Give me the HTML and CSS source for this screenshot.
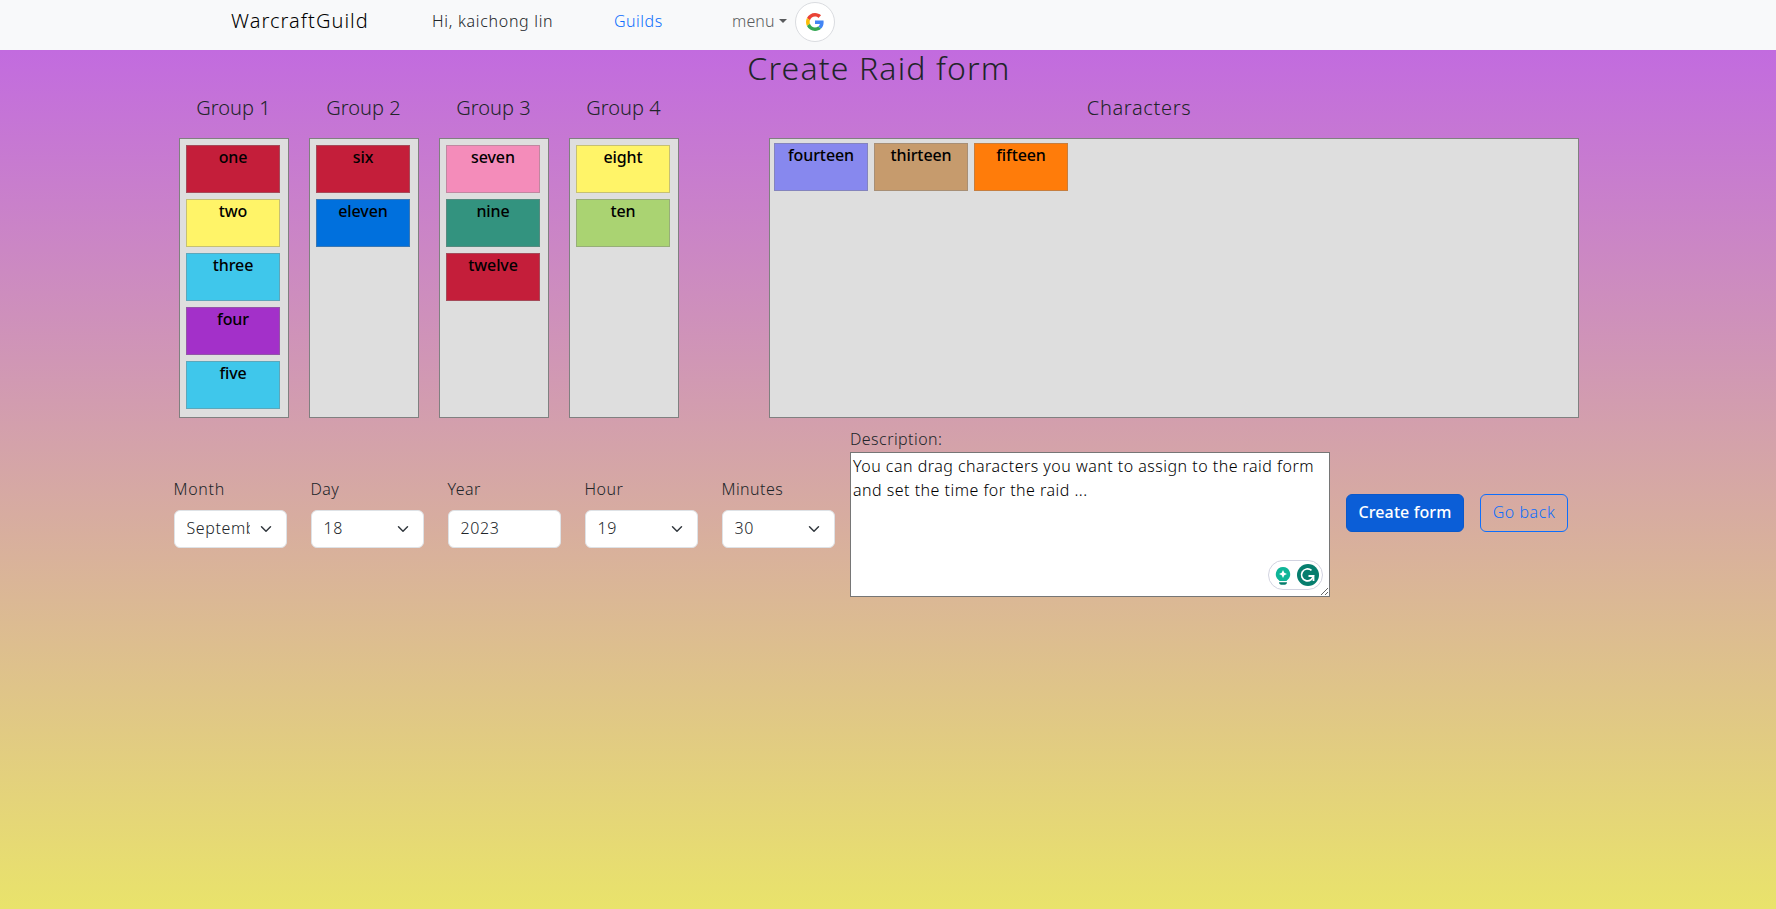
FILE: index.html
```html
<!DOCTYPE html>
<html lang="en">
<head>
<meta charset="utf-8">
<title>WarcraftGuild</title>
<link rel="stylesheet" href="styles.css">
</head>
<body>
<nav class="navbar">
  <a class="brand">WarcraftGuild</a>
  <span class="greeting">Hi, kaichong lin</span>
  <a class="nav-link">Guilds</a>
  <a class="menu">menu<i class="caret"></i></a>
  <button class="google" aria-label="Google account">
    <svg width="18" height="18" viewBox="0 0 48 48">
      <path fill="#EA4335" d="M24 9.5c3.54 0 6.71 1.22 9.21 3.6l6.85-6.85C35.9 2.38 30.47 0 24 0 14.62 0 6.51 5.38 2.56 13.22l7.98 6.19C12.43 13.72 17.74 9.5 24 9.5z"/>
      <path fill="#4285F4" d="M46.98 24.55c0-1.57-.15-3.09-.38-4.55H24v9.02h12.94c-.58 2.96-2.26 5.48-4.78 7.18l7.73 6c4.51-4.18 7.09-10.36 7.09-17.65z"/>
      <path fill="#FBBC05" d="M10.53 28.59c-.48-1.45-.76-2.99-.76-4.59s.27-3.14.76-4.59l-7.98-6.19C.92 16.46 0 20.12 0 24c0 3.88.92 7.54 2.56 10.78l7.97-6.19z"/>
      <path fill="#34A853" d="M24 48c6.48 0 11.93-2.13 15.89-5.81l-7.73-6c-2.15 1.45-4.92 2.3-8.16 2.3-6.26 0-11.57-4.22-13.47-9.91l-7.98 6.19C6.51 42.62 14.62 48 24 48z"/>
    </svg>
  </button>
</nav>
<main>
  <h1 class="title">Create Raid form</h1>
  <section class="boards">
    <div class="group"><h2 class="heading">Group 1</h2>
      <div class="box">
        <div class="card red">one</div><div class="card yellow">two</div><div class="card cyan">three</div><div class="card purple">four</div><div class="card cyan">five</div>
      </div>
    </div>
    <div class="group"><h2 class="heading">Group 2</h2>
      <div class="box"><div class="card red">six</div><div class="card blue">eleven</div></div>
    </div>
    <div class="group"><h2 class="heading">Group 3</h2>
      <div class="box"><div class="card pink">seven</div><div class="card teal">nine</div><div class="card red">twelve</div></div>
    </div>
    <div class="group"><h2 class="heading">Group 4</h2>
      <div class="box"><div class="card yellow">eight</div><div class="card green">ten</div></div>
    </div>
    <div class="characters"><h2 class="heading wide">Characters</h2>
      <div class="box pool"><div class="card indigo">fourteen</div><div class="card tan">thirteen</div><div class="card orange">fifteen</div></div>
    </div>
  </section>
  <form class="raid-form">
    <div class="fields">
      <label class="field"><span class="month">Month</span><select class="control select"><option>September</option></select></label>
      <label class="field"><span>Day</span><select class="control select"><option>18</option></select></label>
      <label class="field"><span>Year</span><input class="control" value="2023"></label>
      <label class="field"><span>Hour</span><select class="control select"><option>19</option></select></label>
      <label class="field"><span>Minutes</span><select class="control select"><option>30</option></select></label>
    </div>
    <div class="description">
      <label for="desc">Description:</label>
      <textarea id="desc" spellcheck="false">You can drag characters you want to assign to the raid form and set the time for the raid ...</textarea>
      <div class="assistant">
        <svg width="55" height="30" viewBox="0 0 55 30">
          <rect x=".5" y=".5" width="54" height="29" rx="14.5" fill="#fff" stroke="#d2d3e0"/>
          <path fill="#0fb598" d="M15 7a7.2 7.2 0 0 1 4.4 12.9L18.5 21h-7l-.9-1.1A7.2 7.2 0 0 1 15 7z"/>
          <path fill="#fff" d="M15 10l1.3 2.7L19 14l-2.7 1.3L15 18l-1.3-2.7L11 14l2.7-1.3z"/>
          <path fill="#077e6d" d="M11 22.3h8c0 1.500-1 2.400-2.200 2.400h-3.600c-1.200 0-2.200-.9-2.200-2.400z"/>
          <circle cx="40" cy="15" r="11" fill="#067e6e"/>
          <path d="M43.500 10.400a6 6 0 1 0 2 4.900" fill="none" stroke="#fff" stroke-width="1.700"/>
          <path d="M40.500 16h5v5" fill="none" stroke="#fff" stroke-width="1.800"/>
        </svg>
      </div>
    </div>
    <div class="actions">
      <button type="button" class="btn primary">Create form</button>
      <button type="button" class="btn outline">Go back</button>
    </div>
  </form>
</main>
</body>
</html>
```
FILE: styles.css
```css
* { box-sizing: border-box; }
body {
  margin: 0;
  height: 909px;
  overflow: hidden;
  display: flex;
  flex-direction: column;
  font: 300 16px/24px "Noto Sans", sans-serif;
  letter-spacing: .45px;
  color: #212529;
}
.navbar {
  height: 50px;
  flex: none;
  display: flex;
  align-items: flex-start;
  padding: 0 0 0 231px;
  background: #f8f9fa;
}
.brand { width: 201px; padding-top: 6px; font-size: 20px; line-height: 30px; letter-spacing: 1.05px; color: #000; }
.greeting { width: 182px; padding-top: 9px; letter-spacing: .7px; }
.nav-link { width: 118px; padding-top: 9px; letter-spacing: .5px; color: #0d6efd; }
.menu { width: 63px; padding-top: 9px; letter-spacing: .1px; color: #595b5d; display: flex; align-items: center; }
.caret { margin: 0 0 0 4px; border: 4px solid transparent; border-top-color: currentColor; border-bottom: 0; }
.google {
  width: 40px; height: 40px; margin-top: 2px; padding: 0;
  display: grid; place-items: center;
  background: #fff; border: 1px solid #dadce0; border-radius: 50%;
}
main { flex: 1; background: linear-gradient(#c26bdf, #e9e36b); }
.title {
  margin: 0; padding-right: 18px;
  font-size: 32px; font-weight: 300; line-height: 36px; letter-spacing: 1.15px; text-align: center;
}
.boards { display: flex; gap: 20px; padding-left: 179px; }
.heading { margin: 0; height: 52px; padding: 9px 1px 0 0; font-size: 20px; font-weight: 300; line-height: 26px; letter-spacing: .05px; text-align: center; }
.heading.wide { letter-spacing: .65px; padding-right: 70px; }
.group { width: 110px; }
.characters { width: 810px; margin-left: 70px; }
.box { height: 280px; padding: 6px; border: 1px solid #808080; background: #dedede; display: flex; flex-direction: column; gap: 6px; }
.pool { flex-direction: row; padding: 4px; }
.card {
  width: 94px; height: 48px; flex: none;
  border: 1px solid rgba(128, 128, 128, .45);
  font-weight: 500; line-height: 23px; letter-spacing: -.1px; text-align: center; color: #000;
}
.red { background: #c41e3a; }
.yellow { background: #fff468; }
.cyan { background: #3fc7eb; }
.purple { background: #a330c9; }
.blue { background: #0070dd; }
.pink { background: #f48cba; }
.teal { background: #33937f; }
.green { background: #aad372; }
.indigo { background: #8788ee; }
.tan { background: #c69b6d; }
.orange { background: #ff7c0a; }
.raid-form { display: flex; padding: 9px 0 0 173.5px; }
.fields { display: flex; gap: 24px; padding-top: 50px; }
.field { width: 113px; display: flex; flex-direction: column; gap: 9px; }
.field .month { letter-spacing: .7px; }
.control {
  appearance: none;
  width: 113px; height: 38px; padding: 5px 12px 7px;
  border: 1px solid #dee2e6; border-radius: 6px; background: #fff;
  font: inherit; letter-spacing: .6px; color: #212529;
}
.select {
  padding-right: 36px;
  background: #fff url("data:image/svg+xml,%3csvg xmlns='http://www.w3.org/2000/svg' viewBox='0 0 16 16'%3e%3cpath fill='none' stroke='%23343a40' stroke-linecap='round' stroke-linejoin='round' stroke-width='2' d='m2 5 6 6 6-6'/%3e%3c/svg%3e") no-repeat right 12px center / 16px 12px;
}
.description { position: relative; width: 480px; margin-left: 15.5px; display: flex; flex-direction: column; gap: 1px; }
.description textarea {
  width: 480px; height: 145px; margin: 0; padding: 1px 2px;
  border: 1px solid #767676; border-radius: 0; background: #fff;
  font: inherit; letter-spacing: .48px; color: #000; resize: both;
}
.assistant { position: absolute; right: 7px; bottom: 7px; width: 55px; height: 30px; }
.actions { display: flex; gap: 16px; padding: 67px 0 0 16px; }
.btn { height: 38px; padding: 4px 0 7px; border: 1px solid #0d6efd; border-radius: 6px; font: inherit; }
.primary { width: 118px; background: #0b5ed7; border-color: #0a58ca; color: #fff; font-weight: 500; letter-spacing: .1px; }
.outline { width: 88px; background: transparent; color: #0d6efd; letter-spacing: .55px; }
```
